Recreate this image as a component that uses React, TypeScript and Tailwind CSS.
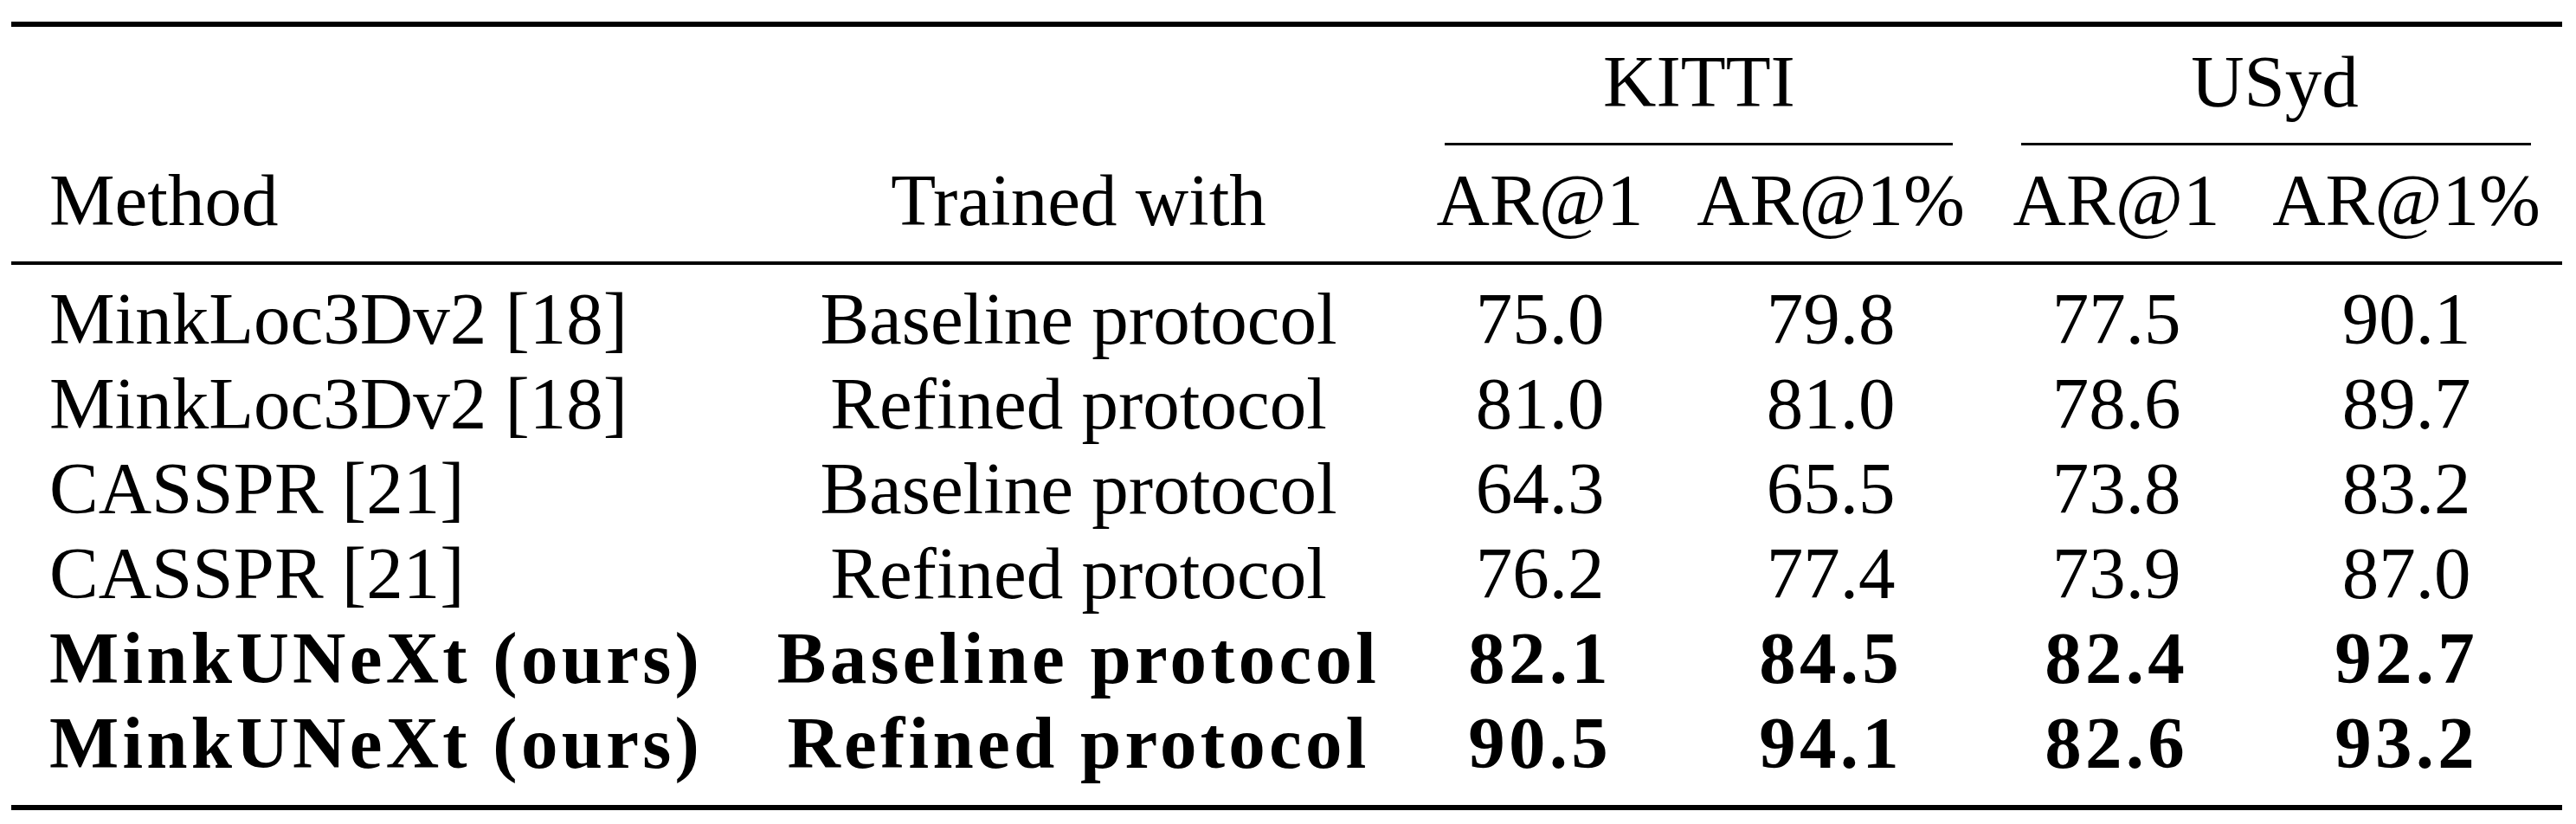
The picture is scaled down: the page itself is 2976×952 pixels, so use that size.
const cols = "grid grid-cols-[859px_748px_318px_354px_306px_364px]";

const rows = [
  { method: "MinkLoc3Dv2 [18]", trained: "Baseline protocol", vals: ["75.0", "79.8", "77.5", "90.1"], bold: false },
  { method: "MinkLoc3Dv2 [18]", trained: "Refined protocol", vals: ["81.0", "81.0", "78.6", "89.7"], bold: false },
  { method: "CASSPR [21]", trained: "Baseline protocol", vals: ["64.3", "65.5", "73.8", "83.2"], bold: false },
  { method: "CASSPR [21]", trained: "Refined protocol", vals: ["76.2", "77.4", "73.9", "87.0"], bold: false },
  { method: "MinkUNeXt (ours)", trained: "Baseline protocol", vals: ["82.1", "84.5", "82.4", "92.7"], bold: true },
  { method: "MinkUNeXt (ours)", trained: "Refined protocol", vals: ["90.5", "94.1", "82.6", "93.2"], bold: true },
];

export default function App() {
  return (
    <div className="w-[2976px] h-[952px] bg-white text-black [font-family:'Liberation_Serif','Times_New_Roman',serif] text-[85px]">
      <div className="pt-[25px] pl-[13px] w-[2960px]">
        <div className="h-[6px] bg-black"></div>

        {/* group header */}
        <div className={cols + " pt-[13px] pb-[21px] leading-[100px]"}>
          <div></div>
          <div></div>
          <div className="col-span-2 text-center pl-[14px]">KITTI</div>
          <div className="col-span-2 text-center pl-[2px]">USyd</div>
        </div>
        <div className={cols + " h-[3px]"}>
          <div></div>
          <div></div>
          <div className="col-span-2 ml-[49px] mr-[36px] bg-black"></div>
          <div className="col-span-2 ml-[43px] mr-[38px] bg-black"></div>
        </div>

        {/* column header */}
        <div className={cols + " pt-[13px] pb-[21px] leading-[100px]"}>
          <div className="pl-[44px]">Method</div>
          <div className="text-center">Trained with</div>
          <div className="text-center">AR@1</div>
          <div className="text-center">AR@1%</div>
          <div className="text-center">AR@1</div>
          <div className="text-center">AR@1%</div>
        </div>
        <div className="h-[4px] bg-black"></div>

        {/* body */}
        <div className="pt-[13px] pb-[23px] leading-[98px]">
          {rows.map((r, i) => (
            <div key={i} className={cols + (r.bold ? " font-bold tracking-[0.05em]" : "")}>
              <div className="pl-[44px] whitespace-nowrap">{r.method}</div>
              <div className="text-center whitespace-nowrap">{r.trained}</div>
              {r.vals.map((v, j) => (
                <div key={j} className="text-center">{v}</div>
              ))}
            </div>
          ))}
        </div>
        <div className="h-[6px] bg-black"></div>
      </div>
    </div>
  );
}
